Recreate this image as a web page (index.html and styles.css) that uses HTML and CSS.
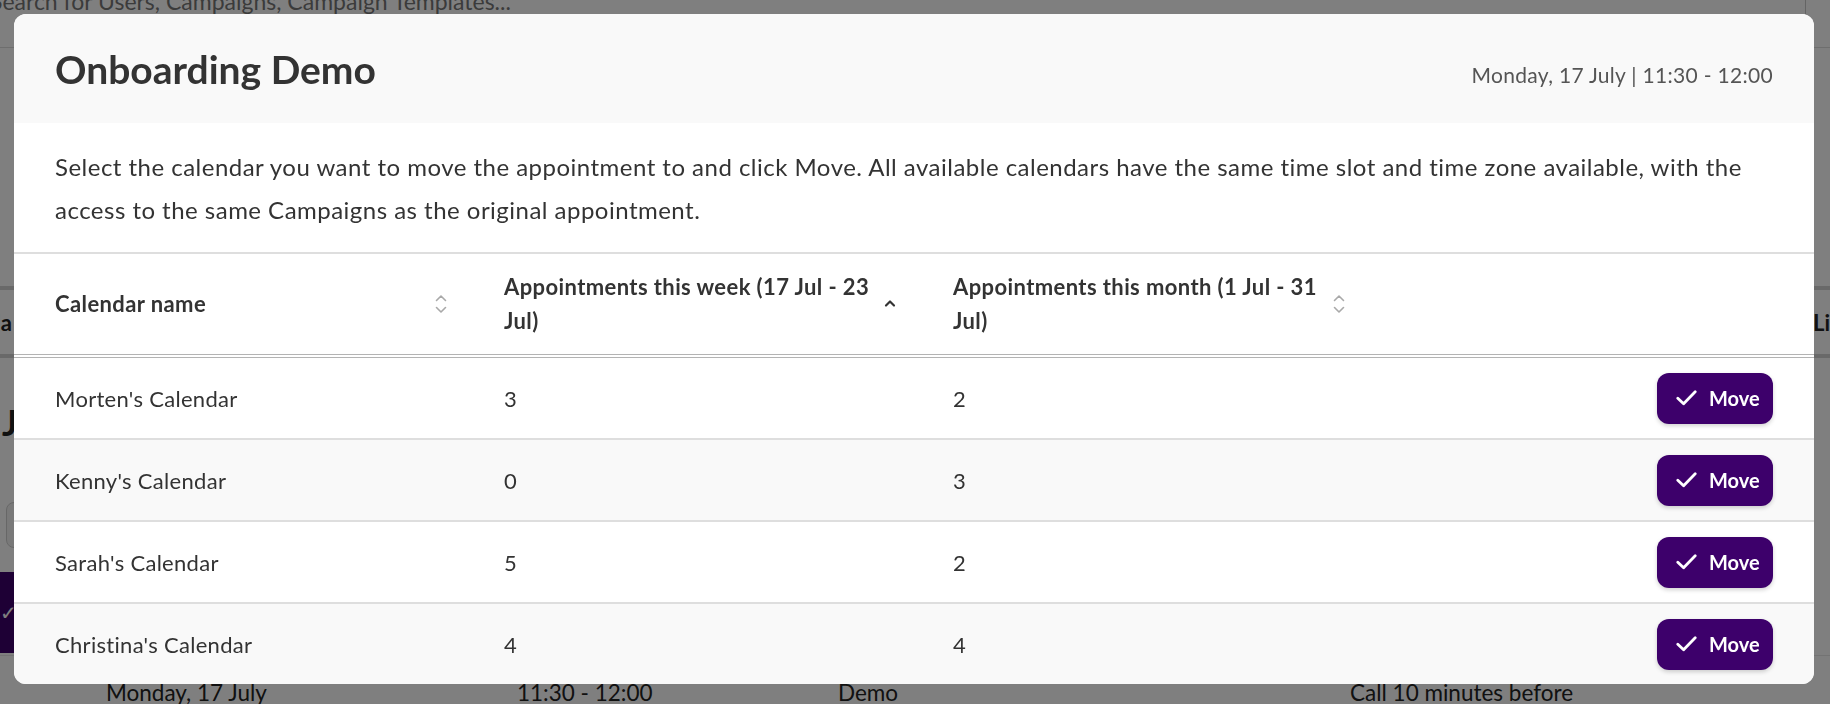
FILE: index.html
```html
<!DOCTYPE html>
<html lang="en">
<head>
<meta charset="utf-8">
<title>Move appointment</title>
<link rel="stylesheet" href="styles.css">
</head>
<body>
<div class="page">
  <div class="topbar">
    <div class="search">Search for Users, Campaigns, Campaign Templates...</div>
  </div>
  <div class="bg-tabs">
    <div class="tab-left"><span>Agenda</span></div>
    <div class="tab-spacer"></div>
    <div class="tab-right"><span>List view</span></div>
  </div>
  <div class="bg-heading">July 2023</div>
  <div class="bg-input"></div>
  <div class="bg-button"><span class="bg-check">✓</span></div>
  <div class="bg-row">
    <span>Monday, 17 July</span>
    <span>11:30 - 12:00</span>
    <span>Demo</span>
    <span>Call 10 minutes before</span>
  </div>
</div>

<div class="overlay">
  <div class="modal">
    <div class="modal-header">
      <h1 class="modal-title">Onboarding Demo</h1>
      <div class="modal-date">Monday, 17 July | 11:30 - 12:00</div>
    </div>
    <p class="modal-desc">Select the calendar you want to move the appointment to and click Move. All available calendars have the same time slot and time zone available, with the access to the same Campaigns as the original appointment.</p>
    <div class="table">
      <div class="thead">
        <div class="th"><span class="th-label">Calendar name</span>
          <svg class="sort" width="12" height="22" viewBox="0 0 12 22"><path d="M1.5 7.5 L6 3 L10.5 7.5" /><path d="M1.5 14.5 L6 19 L10.5 14.5" /></svg>
        </div>
        <div class="th"><span class="th-label">Appointments this week (17 Jul - 23 Jul)</span>
          <svg class="sort active" width="12" height="22" viewBox="0 0 12 22"><path d="M2 12.5 L6 8.5 L10 12.5" /></svg>
        </div>
        <div class="th"><span class="th-label">Appointments this month (1 Jul - 31 Jul)</span>
          <svg class="sort" width="12" height="22" viewBox="0 0 12 22"><path d="M1.5 7.5 L6 3 L10.5 7.5" /><path d="M1.5 14.5 L6 19 L10.5 14.5" /></svg>
        </div>
        <div class="th"></div>
      </div>
      <div class="tr">
        <div class="td">Morten's Calendar</div><div class="td">3</div><div class="td">2</div>
        <div class="td td-action"><button class="move-btn"><svg width="21" height="16" viewBox="0 0 21 16"><path d="M1.8 8.2 L7.6 13.8 L19.2 1.8" /></svg><span>Move</span></button></div>
      </div>
      <div class="tr">
        <div class="td">Kenny's Calendar</div><div class="td">0</div><div class="td">3</div>
        <div class="td td-action"><button class="move-btn"><svg width="21" height="16" viewBox="0 0 21 16"><path d="M1.8 8.2 L7.6 13.8 L19.2 1.8" /></svg><span>Move</span></button></div>
      </div>
      <div class="tr">
        <div class="td">Sarah's Calendar</div><div class="td">5</div><div class="td">2</div>
        <div class="td td-action"><button class="move-btn"><svg width="21" height="16" viewBox="0 0 21 16"><path d="M1.8 8.2 L7.6 13.8 L19.2 1.8" /></svg><span>Move</span></button></div>
      </div>
      <div class="tr">
        <div class="td">Christina's Calendar</div><div class="td">4</div><div class="td">4</div>
        <div class="td td-action"><button class="move-btn"><svg width="21" height="16" viewBox="0 0 21 16"><path d="M1.8 8.2 L7.6 13.8 L19.2 1.8" /></svg><span>Move</span></button></div>
      </div>
    </div>
  </div>
</div>
</body>
</html>
```

FILE: styles.css
```css
* { box-sizing: border-box; }
html, body { margin: 0; padding: 0; }
body {
  width: 1830px;
  height: 704px;
  overflow: hidden;
  font-family: Lato, "Open Sans", sans-serif;
  color: #333;
  background: #fff;
}

/* ---------- background page ---------- */
.page {
  width: 1830px;
  height: 704px;
  overflow: hidden;
}
.topbar {
  height: 48px;
  border-bottom: 1px solid #dcdcdc;
  display: flex;
}
.search {
  width: 1816px;
  margin-left: -10px;
  margin-top: -14px;
  font-size: 23px;
  line-height: 30px;
  color: #777;
  border-right: 1px solid #c8c8c8;
}
.bg-tabs {
  margin-top: 238px;
  height: 72px;
  border-top: 4px solid #d2d2d2;
  border-bottom: 4px solid #d2d2d2;
  display: flex;
  align-items: center;
  font-size: 22px;
  font-weight: 700;
  color: #222;
  white-space: nowrap;
}
.tab-left { flex: 0 0 12px; min-width: 0; display: flex; justify-content: flex-end; }
.tab-spacer { flex: 1 1 auto; min-width: 0; }
.tab-right { flex: 0 0 17px; min-width: 0; }
.bg-heading {
  margin-top: 44px;
  padding-left: 2px;
  font-size: 36px;
  line-height: 40px;
  font-weight: 700;
  color: #222;
}
.bg-input {
  margin-top: 60px;
  margin-left: 6px;
  width: 320px;
  height: 46px;
  border: 1px solid #cfcfcf;
  border-radius: 8px;
  background: #f3f3f3;
}
.bg-button {
  margin-top: 24px;
  margin-left: -20px;
  width: 220px;
  height: 81px;
  background: #3d006b;
  color: #fff;
  display: flex;
  align-items: center;
  padding-left: 20px;
  font-size: 20px;
}
.bg-row {
  margin-top: 2px;
  height: 60px;
  border-top: 1px solid #e6e6e6;
  display: grid;
  grid-template-columns: 411px 321px 512px 1fr;
  padding-left: 106px;
  padding-top: 22px;
  font-size: 22.5px;
  line-height: 30px;
  color: #222;
  white-space: nowrap;
}

/* ---------- overlay + modal ---------- */
.overlay {
  position: fixed;
  inset: 0;
  background: rgba(0, 0, 0, 0.5);
  padding: 14px 16px 0 14px;
}
.modal {
  width: 1800px;
  height: 670px;
  background: #fff;
  border-radius: 12px;
  overflow: hidden;
}
.modal-header {
  height: 109px;
  background: #f9f9f9;
  display: flex;
  align-items: flex-start;
  justify-content: space-between;
  padding: 31px 41px 0 41px;
}
.modal-title {
  margin: 0;
  font-size: 39px;
  line-height: 48px;
  font-weight: 700;
  color: #333;
}
.modal-date {
  margin-top: 17px;
  font-size: 21px;
  line-height: 25px;
  letter-spacing: 0.3px;
  color: #555;
}
.modal-desc {
  margin: 0;
  padding: 22px 41px 21px 41px;
  font-size: 24px;
  letter-spacing: 0.48px;
  line-height: 43px;
  color: #333;
  border-bottom: 2px solid #dedede;
}

.thead, .tr {
  display: grid;
  grid-template-columns: 449px 449px 449px 1fr;
}
.thead {
  height: 104px;
  border-bottom: 4px double #b3b3b3;
}
.th {
  display: flex;
  align-items: center;
  padding: 0 16px 0 41px;
  font-size: 22px;
  letter-spacing: 0.4px;
  line-height: 34px;
  font-weight: 700;
  color: #333;
}
.th-label { flex: 0 1 auto; max-width: 374px; }
.sort {
  flex: none;
  margin-left: auto;
  fill: none;
  stroke: #a9a9a9;
  stroke-width: 1.6;
  stroke-linecap: round;
  stroke-linejoin: round;
}
.sort.active { stroke: #333; stroke-width: 2.2; }

.tr {
  height: 82px;
  border-bottom: 2px solid #dedede;
}
.tr:nth-of-type(odd) { background: #f9f9f9; }
.tr:nth-of-type(even) { background: #fff; }
.td {
  display: flex;
  align-items: center;
  padding-left: 41px;
  font-size: 22px;
  letter-spacing: 0.3px;
  color: #333;
}
.td-action {
  justify-content: flex-end;
  padding-right: 41px;
}
.move-btn {
  display: flex;
  align-items: center;
  gap: 12px;
  height: 51px;
  width: 116px;
  padding: 0 0 0 19px;
  border: none;
  border-radius: 12px;
  background: #3d006b;
  color: #fff;
  font-family: Lato, "Open Sans", sans-serif;
  font-size: 20px;
  font-weight: 700;
  box-shadow: 0 2px 4px rgba(0, 0, 0, 0.18);
}
.move-btn svg {
  fill: none;
  stroke: #fff;
  stroke-width: 2.8;
  stroke-linecap: round;
  stroke-linejoin: round;
}
```
